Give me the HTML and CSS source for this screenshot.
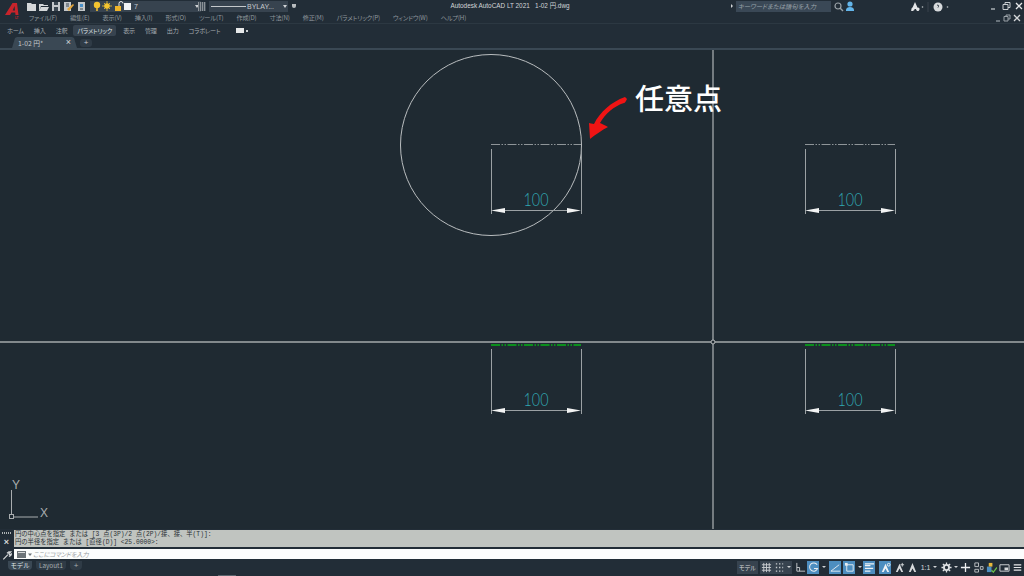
FILE: index.html
```html
<!DOCTYPE html>
<html>
<head>
    <meta charset="utf-8">
    <title>Autodesk AutoCAD LT 2021 - 1-02 円.dwg</title>
    <link rel="stylesheet" href="styles.css">
</head>
<body>
<div class="app">
    <!-- title row -->
    <div class="titlebar">
        <svg class="logo" width="18" height="19" viewBox="0 0 18 19">
            <path fill-rule="evenodd" d="M1 15L8.500 3H13l1.500 12h-3l-.3-2.500H7.500L6 15zM8.700 10.500h2.300l-.5-4.500z" fill="#c8242b"/>
            <text x="11" y="19">LT</text>
        </svg>
        <div class="quick">
            <svg width="62" height="11" viewBox="0 0 62 11">
                <path d="M1 2h4l1 1h4v7H1z" fill="#d5d8da"/>
                <path d="M13 3h4l1 1h4v1h-7l-2 5zM15 6h8l-2 4h-8z" fill="#d5d8da"/>
                <path d="M26 1h8v9h-8z" fill="#c3c7ca"/><path d="M28 1h4v3h-4zM28 6h4v4h-4z" fill="#3a4650"/>
                <path d="M38 1h7v9h-7z" fill="#c3c7ca"/><path d="M40 3h3M40 5h3" stroke="#3a4650"/><path d="M41 8l6-5 1 1-5 6z" fill="#e2a43a"/>
                <path d="M52 1h7v9h-7z" fill="#c3c7ca"/><path d="M54 3h3v3h-3z" fill="#4a90c8"/><path d="M54 8h3" stroke="#3a4650"/>
            </svg>
        </div>
        <div class="layer">
            <svg width="40" height="11" viewBox="0 0 40 11">
                <circle cx="5" cy="4" r="3.2" fill="#f4c430"/><path d="M4 7h2v3H4z" fill="#c9a437"/>
                <circle cx="15" cy="5" r="2.8" fill="#f4c430"/><path d="M15 0v10M10 5h10M12 2l6 6M18 2l-6 6" stroke="#f4c430" stroke-width=".8"/>
                <path d="M23 5h6v5h-6z" fill="#f0b429"/><path d="M27 5V2.5a2 2 0 0 1 4 0" fill="none" stroke="#e6e6e6"/>
                <path d="M33 2h7v7h-7z" fill="#f2f3f4" transform="translate(-1 0)"/>
            </svg>
            <span class="layer-name">7</span>
            <i class="caret"></i>
        </div>
        <div class="hatch"></div>
        <div class="ltype"><b></b><span>BYLAY...</span><i class="caret"></i></div>
        <i class="shield"></i>
        <div class="title">Autodesk AutoCAD LT 2021 &nbsp; 1-02 円.dwg</div>
        <div class="search-arrow"></div>
        <div class="search">キーワードまたは語句を入力</div>
        <svg class="tool" width="30" height="11" viewBox="0 0 30 11">
            <circle cx="5" cy="5" r="3" fill="none" stroke="#9aa2a8" stroke-width="1.2"/><path d="M7 7l3 3" stroke="#9aa2a8" stroke-width="1.4"/>
            <circle cx="17" cy="3" r="2.6" fill="#63b5ea"/><path d="M13 9c0-2 2-3 4-3s4 1 4 3v1h-8z" fill="#63b5ea"/>
        </svg>
        <svg class="share" width="42" height="11" viewBox="0 0 42 11">
            <path d="M5 1L1 10h2l1-2h2l1 2h2z" fill="#e3e5e7"/><circle cx="3" cy="8" r="1.6" fill="#e3e5e7"/><circle cx="8" cy="8" r="1.6" fill="#e3e5e7"/>
            <circle cx="12.500" cy="6" r=".8" fill="#bfc3c6"/>
            <path d="M18 1v10" stroke="#38434d"/>
            <circle cx="28" cy="6" r="4.500" fill="#d7dadc"/><path d="M27 4.500c1-1 2 0 1.500 1l-.5 1" fill="none" stroke="#222d37"/>
            <circle cx="37.500" cy="6" r=".8" fill="#bfc3c6"/>
        </svg>
        <svg class="win" width="34" height="10" viewBox="0 0 34 10">
            <path d="M2 8h4" stroke="#c9cdd0" stroke-width="1.200"/>
            <path d="M14 3.500h5v5h-5zM16 3.500v-2h5v5h-2" fill="none" stroke="#c9cdd0"/>
            <path d="M27 2l6 6M33 2l-6 6" stroke="#e6e8ea" stroke-width="1.300"/>
        </svg>
    </div>

    <!-- menu bar -->
    <div class="menubar">
        <span>ファイル(F)</span><span>編集(E)</span><span>表示(V)</span><span>挿入(I)</span>
        <span>形式(O)</span><span>ツール(T)</span><span>作成(D)</span><span>寸法(N)</span>
        <span>修正(M)</span><span>パラメトリック(P)</span><span>ウィンドウ(W)</span><span>ヘルプ(H)</span>
        <svg class="win-doc" width="26" height="10" viewBox="0 0 26 10">
            <path d="M1 8h4" stroke="#9aa2a8" stroke-width="1.200"/>
            <path d="M9 3.500h4v4.500H9zM11 3.500V2h4v4h-2" fill="none" stroke="#9aa2a8"/>
            <path d="M19 2l6 6M25 2l-6 6" stroke="#d3d6d8" stroke-width="1.300"/>
        </svg>
    </div>

    <!-- ribbon tabs -->
    <div class="ribbon">
        <span>ホーム</span><span>挿入</span><span>注釈</span><span class="on">パラメトリック</span>
        <span>表示</span><span>管理</span><span>出力</span><span>コラボレート</span>
        <em class="rb-extra"><i></i></em>
    </div>

    <!-- drawing tabs -->
    <div class="doctabs">
        <div class="doctab"><span>1-02 円*</span><b>×</b></div>
        <div class="docplus">+</div>
    </div>

    <!-- model space -->
    <div class="canvas">
        <svg class="drawing" width="1024" height="479" viewBox="0 50 1024 479">
            <defs>
                <g id="dim">
                    <path d="M491.500 149v65M581.500 149v65M500 210.500h74" stroke="#9ba1a4" fill="none"/>
                    <path d="M491 210.500l14-2.500v5zM581 210.500l-14-2.500v5z" fill="#f2f3f3"/>
                    <text class="dim-num" x="536" y="206" text-anchor="middle" textLength="25" lengthAdjust="spacingAndGlyphs">100</text>
                </g>
            </defs>

            <path d="M0 342h1024M713 50v479" stroke="#a4a9ab" stroke-width="1.300" fill="none"/>
            <circle cx="713" cy="342" r="2" fill="#1f2a32" stroke="#b5b9bb"/>
            <circle cx="491" cy="145" r="90.500" fill="none" stroke="#b9bdbf"/>

            <path class="dash" d="M491 144.500h90M805 144.500h90"/>
            <path class="dash green" d="M491 345h90M805 345h90"/>
            <use href="#dim"/>
            <use href="#dim" x="314"/>
            <use href="#dim" y="200"/>
            <use href="#dim" x="314" y="200"/>

            <!-- red pointer -->
            <path d="M627 99c-1 2-2 4-3 4-10 3-19 11-24 20 2 1 5 2 8 4-6 3-13 8-18 12l-1-16c1 0 3 1 5 1 6-12 17-22 31-27z" fill="#f01414"/>
            <text class="note" x="635" y="110">任意点</text>

            <!-- UCS icon -->
            <path d="M11.500 490v24M14 517h24" stroke="#a9adaf" fill="none"/>
            <rect x="9.500" y="514.500" width="4" height="4" fill="none" stroke="#a9adaf"/>
            <text class="ucs" x="16" y="489">Y</text>
            <text class="ucs" x="44" y="517">X</text>
        </svg>
    </div>

    <!-- command line -->
    <div class="command">
        <div class="cmd-side">
            <i class="grip"></i>
            <b>×</b>
            <svg width="10" height="10" viewBox="0 0 10 10"><path d="M1 9l5-5M5 2.500l2-1.500 2 0-2 2 1 1 2-1-1 2-2 1" stroke="#d5d8da" stroke-width="1.300" fill="none"/></svg>
        </div>
        <div class="cmd-main">
            <div class="history">
                <p>円の中心点を指定 または [3 点(3P)/2 点(2P)/接、接、半(T)]:</p>
                <p>円の半径を指定 または [直径(D)] &lt;25.0000&gt;:</p>
            </div>
            <div class="prompt">
                <svg width="16" height="9" viewBox="0 0 16 9"><path d="M1 1h9v7H1z" fill="#6d7479"/><path d="M2 2h7v1H2z" fill="#d8dadb"/><path d="M12 3.500h4l-2 2.500z" fill="#6d7479"/></svg>
                <span>ここにコマンドを入力</span>
            </div>
        </div>
    </div>

    <!-- status bar -->
    <div class="statusbar">
        <div class="layouts">
            <span class="lt on">モデル</span><span class="lt">Layout1</span><span class="lt add">+</span>
        </div>
        <div class="status">
            <span class="st wide lit">モデル</span>
            <span class="st lit"><svg viewBox="0 0 12 12"><path d="M3 1v10M6 1v10M9 1v10M1 3h10M1 6h10M1 9h10" stroke="#c9cdd0"/></svg></span>
            <span class="st lit"><svg viewBox="0 0 12 12"><path d="M2 2h8M2 6h8M2 10h8" stroke="#c9cdd0" stroke-width="1.500" stroke-dasharray="1.500 2"/></svg></span>
            <i class="st-caret lit"></i>
            <span class="st gap"><svg viewBox="0 0 12 12"><path d="M2 1v9h9" stroke="#c9cdd0" fill="none"/><path d="M2 6h3v4" stroke="#c9cdd0" fill="none"/></svg></span>
            <span class="st blue"><svg viewBox="0 0 12 12"><path d="M10 3A4.500 4.500 0 1 0 10.500 7H6.500" stroke="#e8edf1" stroke-width="1.100" fill="none"/></svg></span>
            <i class="st-caret"></i>
            <span class="st blue gap"><svg viewBox="0 0 12 12"><path d="M1 10L10 3M1 10h10" stroke="#e8edf1" fill="none"/></svg></span>
            <span class="st blue"><svg viewBox="0 0 12 12"><path d="M3 3h7v7H3z" stroke="#e8edf1" fill="none"/><path d="M1 1h3v3H1z" fill="#e8edf1"/></svg></span>
            <i class="st-caret"></i>
            <span class="st blue"><svg viewBox="0 0 12 12"><path d="M1 2h10M1 4h6M1 7h9M1 10h6" stroke="#f0f3f5" stroke-width="1.400"/></svg></span>
            <span class="st blue gap"><svg viewBox="0 0 12 12"><path d="M6 2L2 11h2l2-4 2 4h2z" fill="#f0f3f5"/><circle cx="9.500" cy="3" r="1.500" fill="none" stroke="#f0f3f5"/></svg></span>
            <span class="st"><svg viewBox="0 0 12 12"><path d="M6 2L2 11h2l2-4 2 4h2z" fill="#d7dadc"/><path d="M9 1v4M7 3h4" stroke="#d7dadc"/></svg></span>
            <span class="st"><svg viewBox="0 0 12 12"><path d="M6 1L2 11h2l2-4 2 4h2z" fill="#d7dadc"/></svg></span>
            <span class="st scale">1:1</span>
            <i class="st-caret"></i>
            <span class="st gap"><svg viewBox="0 0 12 12"><circle cx="6" cy="6" r="2.800" fill="none" stroke="#dfe2e4" stroke-width="2"/><path d="M6 .500v2M6 9.500v2M.500 6h2M9.500 6h2M2 2l1.500 1.500M8.500 8.500L10 10M10 2L8.500 3.500M3.500 8.500L2 10" stroke="#dfe2e4" stroke-width="1.400"/></svg></span>
            <i class="st-caret"></i>
            <span class="st"><svg viewBox="0 0 12 12"><path d="M6 1v10M1 6h10" stroke="#eef0f1" stroke-width="1.400"/></svg></span>
            <span class="st"><svg viewBox="0 0 12 12"><path d="M2 1h4v4H2zM8 5h3v3H8zM2 8h4v3H2z" stroke="#bfc3c6" fill="none"/></svg></span>
            <span class="st"><svg viewBox="0 0 12 12"><path d="M1 5h5v6H1z" fill="#4d8ec0"/><path d="M3 1h4v4H3z" fill="#e7b93c"/><path d="M6 9l2 2 4-5" stroke="#6cc24a" stroke-width="1.400" fill="none"/></svg></span>
            <span class="st"><svg viewBox="0 0 12 12"><path d="M1 3h10v7H1z" stroke="#d7dadc" fill="none"/><path d="M6 6h4v3H6z" fill="#d7dadc"/></svg></span>
            <span class="st end"><svg viewBox="0 0 12 12"><path d="M1 2.500h10M1 6h10M1 9.500h10" stroke="#e6e8ea" stroke-width="1.400"/></svg></span>
        </div>
    </div>
</div>
</body>
</html>
```

FILE: styles.css
```css
* {
    margin: 0;
    padding: 0;
    box-sizing: border-box;
}
body {
    background: #222d37;
    font-family: "Noto Sans CJK JP", "Noto Sans", sans-serif;
    overflow: hidden;
}
svg {
    display: block;
}
.app {
    width: 1024px;
    height: 576px;
    display: flex;
    flex-direction: column;
    position: relative;
    background: #222d37;
    overflow: hidden;
}

/* title row */
.titlebar {
    height: 12px;
    display: flex;
    align-items: center;
    position: relative;
    flex: none;
}
.logo {
    position: absolute;
    left: 4px;
    top: 0;
    z-index: 1;
}
.logo text {
    font: bold 3px "Liberation Sans", sans-serif;
    fill: #c8242b;
}
.quick {
    margin-left: 26px;
    height: 11px;
}
.layer {
    margin-left: 2px;
    width: 111px;
    height: 11px;
    background: #37434f;
    display: flex;
    align-items: center;
    padding-left: 2px;
}
.layer-name {
    margin-left: 2px;
    font: 7px "Liberation Sans", sans-serif;
    color: #c9cdd0;
    flex: 1;
}
.caret {
    width: 0;
    height: 0;
    margin-right: 2px;
    border-left: 2.5px solid transparent;
    border-right: 2.5px solid transparent;
    border-top: 3px solid #d0d3d6;
}
.hatch {
    width: 8px;
    height: 9px;
    margin-left: -3px;
    background: repeating-linear-gradient(90deg, #8b9196 0 1px, #46515b 1px 2px);
}
.ltype {
    margin-left: 3px;
    width: 79px;
    height: 11px;
    background: #37434f;
    display: flex;
    align-items: center;
    padding-left: 2px;
    font: 7px "Liberation Sans", sans-serif;
    color: #c4c8cb;
}
.ltype b {
    width: 35px;
    height: 1px;
    margin-right: 1px;
    background: #c4c8cb;
}
.ltype span {
    flex: 1;
}
.ltype .caret {
    margin-right: 1px;
}
.shield {
    width: 4px;
    height: 4px;
    margin-left: 4px;
    background: #b8bcbf;
    border-radius: 0 0 2px 2px;
}
.title {
    position: absolute;
    left: 410px;
    width: 200px;
    top: 0;
    text-align: center;
    font: 6.4px/12px "Liberation Sans", "Noto Sans CJK JP", sans-serif;
    color: #d3d6d9;
    white-space: nowrap;
}
.search-arrow {
    margin-left: 435px;
    width: 0;
    height: 0;
    border-top: 2px solid transparent;
    border-bottom: 2px solid transparent;
    border-left: 2px solid #d0d3d6;
}
.search {
    margin-left: 3px;
    width: 95px;
    height: 11px;
    padding-left: 2px;
    background: #3a4856;
    color: #9ba4ab;
    font-size: 6.3px;
    line-height: 11px;
    font-style: italic;
    white-space: nowrap;
    font-feature-settings: "palt";
}
.tool {
    margin-left: 2px;
    flex: none;
}
.share {
    margin-left: 47px;
    flex: none;
}
.win {
    margin-left: 37px;
    flex: none;
}

/* menu bar */
.menubar {
    height: 12px;
    flex: none;
    display: flex;
    align-items: center;
    gap: 13px;
    padding-left: 29px;
    font-size: 6.2px;
    letter-spacing: -0.15px;
    color: #8f979d;
    border-bottom: 1px solid #2c3842;
    white-space: nowrap;
    font-feature-settings: "palt";
}
.win-doc {
    margin-left: auto;
    margin-right: 3px;
}

/* ribbon tabs */
.ribbon {
    height: 12px;
    flex: none;
    display: flex;
    align-items: center;
    padding-left: 7px;
    gap: 10px;
    font-size: 6.1px;
    letter-spacing: -0.2px;
    color: #a4abb0;
    white-space: nowrap;
    font-feature-settings: "palt";
}
.ribbon .on {
    margin: 0 -3px 0 -4px;
    padding: 0 4px;
    height: 11px;
    line-height: 11px;
    background: #37434f;
    color: #dfe2e4;
    border-radius: 2px;
}
.rb-extra {
    margin-left: 6px;
    width: 13px;
    height: 5px;
    display: flex;
    position: relative;
}
.rb-extra i {
    width: 8px;
    height: 5px;
    background: #e6e8e9;
}
.rb-extra::after {
    content: "";
    position: absolute;
    left: 10px;
    top: 2px;
    width: 2px;
    height: 2px;
    background: #c9cdd0;
}

/* drawing tabs */
.doctabs {
    height: 12px;
    flex: none;
    display: flex;
    align-items: flex-end;
    padding-left: 12px;
}
.doctab {
    width: 65px;
    height: 11px;
    display: flex;
    align-items: center;
    justify-content: space-between;
    padding: 0 6px;
    background: #3a4854;
    clip-path: polygon(0 100%, 3px 1px, 5px 0, calc(100% - 5px) 0, calc(100% - 3px) 1px, 100% 100%);
    font-size: 6.8px;
    color: #c4c8cb;
}
.doctab b {
    font: normal 9px/11px "Liberation Sans", sans-serif;
    color: #d3d6d8;
}
.docplus {
    width: 12px;
    height: 8px;
    margin: 0 0 1px 3px;
    background: #2f3b46;
    border-radius: 3px;
    font: 8px/8px "Liberation Sans", sans-serif;
    color: #c4c8cb;
    text-align: center;
}

/* model space */
.canvas {
    height: 481px;
    flex: none;
    background: #1f2a32;
    border-top: 2px solid #3a4854;
}
.dash {
    stroke: #8f9599;
    fill: none;
    stroke-dasharray: 9 1.500 1.500 1.500 1.500 1.500;
}
.dash.green {
    stroke: #0a8f1c;
    stroke-width: 2;
}
.dim-num {
    font: 300 18px "Lato", sans-serif;
    fill: #30a8b2;
}
.note {
    font: 500 29px "Noto Sans CJK JP", sans-serif;
    fill: #fff;
}
.ucs {
    font: 300 12px "Liberation Sans", sans-serif;
    fill: #a9adaf;
    text-anchor: middle;
}

/* command line */
.command {
    height: 31px;
    flex: none;
    display: flex;
    padding-top: 1px;
    background: #222d37;
}
.cmd-side {
    width: 13px;
    padding-top: 2px;
    display: flex;
    flex-direction: column;
    align-items: center;
    gap: 2px;
    color: #d5d8da;
}
.grip {
    width: 9px;
    height: 2px;
    background: repeating-linear-gradient(90deg, #aeb3b5 0 1px, transparent 1px 2px);
}
.cmd-side b {
    font: bold 9px/12px "Liberation Sans", sans-serif;
    height: 14px;
}
.cmd-main {
    flex: 1;
    display: flex;
    flex-direction: column;
    gap: 2px;
    padding: 0 0 1px 1px;
}
.history {
    height: 17px;
    padding: 1px 0 0 1px;
    background: #c0c4c0;
    color: #2b3135;
    font: 6.3px/8px "Liberation Mono", "Noto Sans CJK JP", monospace;
    white-space: nowrap;
}
.prompt {
    flex: 1;
    display: flex;
    align-items: center;
    gap: 1px;
    padding-left: 2px;
    background: #fcfdfd;
    color: #9a9fa3;
    font-size: 6.4px;
    letter-spacing: -0.3px;
    font-style: italic;
    font-feature-settings: "palt";
}

/* status bar */
.statusbar {
    flex: 1;
    display: flex;
    justify-content: space-between;
    padding-top: 1px;
}
.statusbar::after {
    content: "";
    position: absolute;
    left: 218px;
    bottom: 0;
    width: 18px;
    height: 1px;
    background: #5a656e;
}
.layouts {
    display: flex;
    gap: 4px;
    padding-left: 8px;
    height: 9px;
}
.lt {
    width: 30px;
    background: #2f3b46;
    border-radius: 0 0 4px 4px;
    color: #a4abb0;
    font-size: 6.4px;
    line-height: 9px;
    text-align: center;
}
.lt.on {
    width: 24px;
    background: #3a4854;
    color: #dfe2e4;
}
.lt.add {
    width: 12px;
    font: 8px/9px "Liberation Sans", sans-serif;
}
.status {
    display: flex;
    height: 13px;
    padding-right: 2px;
    align-items: stretch;
}
.st {
    width: 13px;
    display: flex;
    align-items: center;
    justify-content: center;
    color: #d7dadc;
    font-size: 6px;
    white-space: nowrap;
    font-feature-settings: "palt";
}
.st svg {
    width: 11px;
    height: 11px;
}
.st.wide {
    width: 21px;
    margin-right: 2px;
}
.st.lit,
.st-caret.lit {
    background: #37434f;
}
.st.blue {
    background: #4d8ec0;
    width: 12px;
    margin-right: 2px;
}
.st.gap {
    margin-left: 2px;
}
.st.scale {
    font: 7px "Liberation Sans", sans-serif;
}
.st.end {
    margin-left: 2px;
    width: 9px;
}
.st.end svg {
    width: 9px;
}
.st-caret {
    width: 6px;
    position: relative;
}
.st-caret::after {
    content: "";
    position: absolute;
    left: 1px;
    top: 5px;
    border-left: 2px solid transparent;
    border-right: 2px solid transparent;
    border-top: 2.5px solid #d0d3d6;
}
```
